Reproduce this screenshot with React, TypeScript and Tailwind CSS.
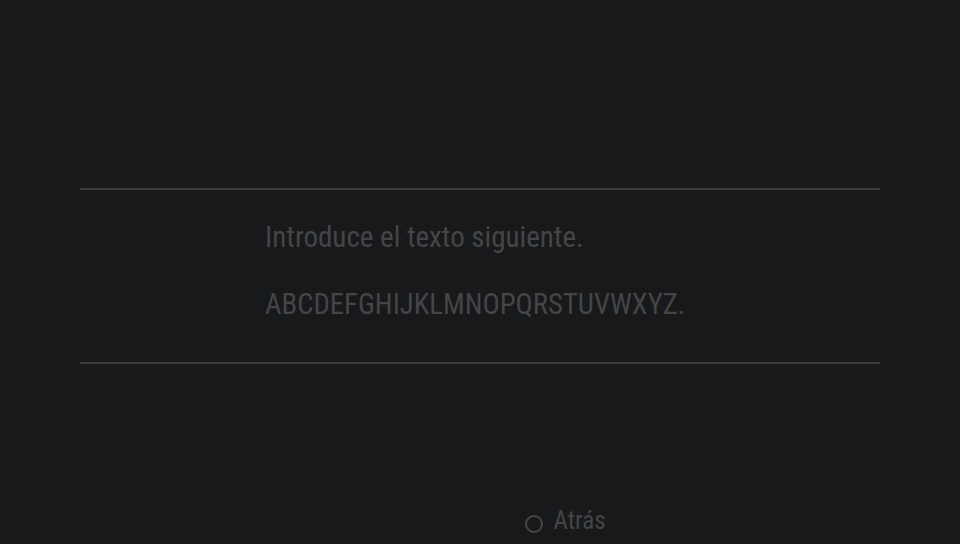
export default function App() {
  const font = { fontFamily: '"Roboto Condensed", Roboto, "Liberation Sans", sans-serif' };
  return (
    <div className="w-[960px] h-[544px] bg-[#18191b] overflow-hidden flex flex-col" style={font}>
      <div className="h-[188px]" />
      <div className="mx-[80px] h-[2px] bg-[#3a3b3d]" />
      <div className="h-[172px] pl-[265px] pt-[29px] text-[#444547]">
        <div className="text-[29px] leading-[36px]">Introduce el texto siguiente.</div>
        <div className="text-[28.7px] leading-[36px] mt-[31px]">ABCDEFGHIJKLMNOPQRSTUVWXYZ.</div>
      </div>
      <div className="mx-[80px] h-[2px] bg-[#3a3b3d]" />
      <div className="flex-1" />
      <div className="flex items-center justify-center gap-[9px] pb-[8px] pl-[170px]">
        <svg width="20" height="20" viewBox="0 0 20 20" className="mt-[6px]">
          <circle cx="10" cy="10" r="8" fill="none" stroke="#444547" strokeWidth="2" />
        </svg>
        <span className="text-[25px] leading-[30px] text-[#444547]">Atrás</span>
      </div>
    </div>
  );
}
